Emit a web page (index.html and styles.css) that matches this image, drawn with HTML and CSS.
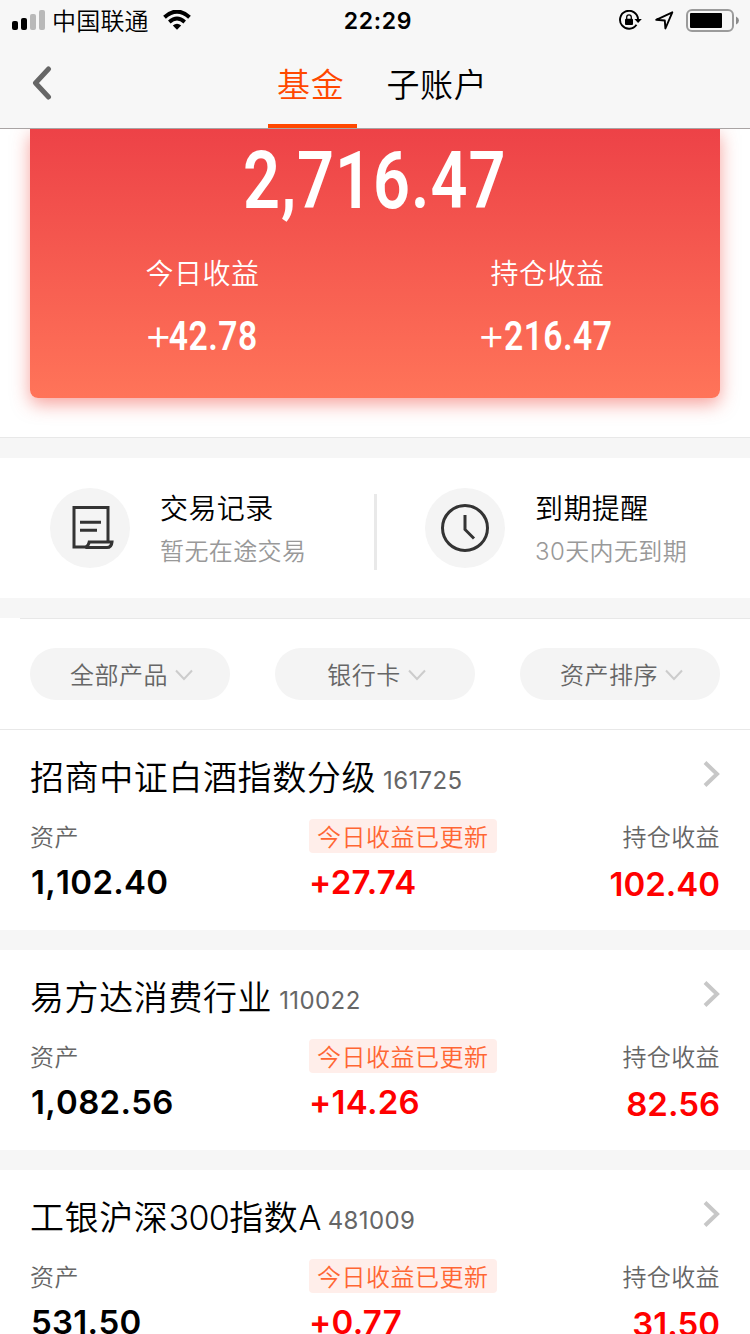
FILE: index.html
```html
<!DOCTYPE html>
<html lang="zh-CN">
<head>
<meta charset="utf-8">
<title>基金</title>
<link rel="stylesheet" href="styles.css">
</head>

<body>
<div class="header">
	<div class="status">
		<div class="status-left">
			<svg class="signal" width="33" height="20" viewBox="0 0 33 20">
				<rect x="0" y="11" width="6" height="9" rx="2"/>
				<rect x="9" y="8" width="6" height="12" rx="2"/>
				<rect x="18" y="4" width="6" height="16" rx="2" fill="#b9b9b9"/>
				<rect x="27" y="0" width="6" height="20" rx="2" fill="#b9b9b9"/>
			</svg>
			<span class="carrier">中国联通</span>
			<svg class="wifi" width="28" height="20" viewBox="0 0 28 20">
				<path d="M1.5 7.2Q14 -4 26.500 7.200" fill="none" stroke="#000" stroke-width="4"/>
				<path d="M6.300 12Q14 5.200 21.700 12" fill="none" stroke="#000" stroke-width="3.800"/>
				<path d="M9.800 15.500Q14 12 18.200 15.500L14 19.800Z"/>
			</svg>
		</div>
		<span class="clock">22:29</span>
		<div class="status-right">
			<svg width="23" height="20" viewBox="0 0 23 20">
				<path d="M17.500 14.800A9 9 0 1 1 19 9" fill="none" stroke="#000" stroke-width="1.900"/>
				<path d="M15.400 9H22.800L19.100 13Z"/>
				<rect x="6" y="8.700" width="8" height="6.300" rx="1"/>
				<path d="M7.700 9V7.200a2.300 2.300 0 0 1 4.600 0V9" fill="none" stroke="#000" stroke-width="1.300"/>
			</svg>
			<svg class="locate" width="19" height="19" viewBox="0 0 19 19">
				<path d="M1.200 8.800L17.300 1.300L10.400 17.500L9.800 9.500Z" fill="none" stroke="#000" stroke-width="1.900" stroke-linejoin="round"/>
			</svg>
			<svg class="battery" width="53" height="23" viewBox="0 0 53 23">
				<rect x="1" y="1" width="46" height="21" rx="5" fill="none" stroke="#9b9b9b" stroke-width="2"/>
				<rect x="4" y="4" width="32" height="15" rx="1"/>
				<path d="M50 7.500Q53 9 53 11.500T50 15.500Z" fill="#8a8a8a"/>
			</svg>
		</div>
	</div>
	<div class="nav">
		<svg class="back" width="20" height="34" viewBox="0 0 20 34">
			<path d="M16.500 3L3.500 17L16.500 31" fill="none" stroke="#666" stroke-width="5" stroke-linecap="round" stroke-linejoin="round"/>
		</svg>
		<div class="tabs">
			<span class="tab active">基金</span>
			<span class="tab">子账户</span>
		</div>
	</div>
</div>

<div class="summary">
	<div class="card">
		<div class="total"><span class="din">2,716.47</span></div>
		<div class="profits">
			<div class="profit">
				<div class="profit-label">今日收益</div>
				<div class="profit-num"><span class="plus">+</span><span class="din">42.78</span></div>
			</div>
			<div class="profit">
				<div class="profit-label">持仓收益</div>
				<div class="profit-num"><span class="plus">+</span><span class="din">216.47</span></div>
			</div>
		</div>
	</div>
</div>

<div class="links">
	<div class="link">
		<div class="circle">
			<svg width="80" height="80" viewBox="0 0 80 80" fill="none" stroke="#333" stroke-width="3">
				<path d="M58 53V19.500H24V59H37"/>
				<path d="M30 34.300H51M30 42.300H47"/>
				<path d="M35.500 59.500Q38.500 58 39.200 54H62Q61.500 59.500 57 59.500Z"/>
			</svg>
		</div>
		<div class="link-text">
			<div class="link-title">交易记录</div>
			<div class="link-sub">暂无在途交易</div>
		</div>
	</div>
	<div class="split"></div>
	<div class="link">
		<div class="circle">
			<svg width="80" height="80" viewBox="0 0 80 80" fill="none" stroke="#333" stroke-width="3">
				<circle cx="40" cy="40" r="22.500"/>
				<path d="M40 27V41.500L49 50.500"/>
			</svg>
		</div>
		<div class="link-text">
			<div class="link-title">到期提醒</div>
			<div class="link-sub">30天内无到期</div>
		</div>
	</div>
</div>

<div class="filters">
	<div class="filter"><span>全部产品</span><svg width="18" height="12" viewBox="0 0 18 12"><path d="M1 1.500L9 10L17 1.500"/></svg></div>
	<div class="filter"><span>银行卡</span><svg width="18" height="12" viewBox="0 0 18 12"><path d="M1 1.500L9 10L17 1.500"/></svg></div>
	<div class="filter"><span>资产排序</span><svg width="18" height="12" viewBox="0 0 18 12"><path d="M1 1.500L9 10L17 1.500"/></svg></div>
</div>

<div class="fund">
	<div class="fund-head">
		<span class="fund-name">招商中证白酒指数分级</span><span class="fund-code">161725</span>
		<svg class="more" width="18" height="26" viewBox="0 0 18 26"><path d="M2 1.500L14 13L2 24.500"/></svg>
	</div>
	<div class="fund-labels">
		<span class="label">资产</span><span class="updated">今日收益已更新</span><span class="label">持仓收益</span>
	</div>
	<div class="fund-nums">
		<span class="num">1,102.40</span><span class="red">+27.74</span><span class="red hold">102.40</span>
	</div>
</div>

<div class="fund">
	<div class="fund-head">
		<span class="fund-name">易方达消费行业</span><span class="fund-code">110022</span>
		<svg class="more" width="18" height="26" viewBox="0 0 18 26"><path d="M2 1.500L14 13L2 24.500"/></svg>
	</div>
	<div class="fund-labels">
		<span class="label">资产</span><span class="updated">今日收益已更新</span><span class="label">持仓收益</span>
	</div>
	<div class="fund-nums">
		<span class="num">1,082.56</span><span class="red">+14.26</span><span class="red hold">82.56</span>
	</div>
</div>

<div class="fund">
	<div class="fund-head">
		<span class="fund-name">工银沪深<span class="latin">300</span>指数<span class="latin">A</span></span><span class="fund-code">481009</span>
		<svg class="more" width="18" height="26" viewBox="0 0 18 26"><path d="M2 1.500L14 13L2 24.500"/></svg>
	</div>
	<div class="fund-labels">
		<span class="label">资产</span><span class="updated">今日收益已更新</span><span class="label">持仓收益</span>
	</div>
	<div class="fund-nums">
		<span class="num">531.50</span><span class="red">+0.77</span><span class="red hold">31.50</span>
	</div>
</div>
</body>
</html>
```
FILE: styles.css
```css
*{
	box-sizing:border-box;
}

body{
	margin:0;
	width:750px;
	height:1334px;
	overflow:hidden;
	background-color:#f6f6f6;
	font-family:Inter,"Noto Sans CJK SC",sans-serif;
	font-weight:350;
	font-kerning:none;
	color:#000;
}

svg{
	display:block;
	flex:none;
}

/* header */
.header{
	position:relative;
	height:129px;
	background-color:#f7f7f7;
	border-bottom:1px solid #a9a4a4;
}

.status{
	display:grid;
	grid-template-columns:1fr auto 1fr;
	height:40px;
	padding:0 11px 0 12px;
	align-items:center;
}

.status-left, .status-right{
	display:flex;
	align-items:center;
}

.status-right{
	justify-content:flex-end;
}

.carrier{
	font-size:24px;
	line-height:40px;
	margin:0 14px 0 7px;
	padding-top:2px;
	height:40px;
	letter-spacing:0.2px;
}

.clock{
	padding:1px 0 0 5px;
	font-size:23px;
	font-weight:600;
	letter-spacing:0.7px;
}

.locate{
	margin:0 12px 0 13px;
}

.nav{
	display:flex;
	height:88px;
	padding-left:32px;
}

.back{
	margin-top:26px;
}

.tabs{
	display:flex;
	margin-left:216px;
	gap:20px;
}

.tab{
	height:88px;
	padding:0 14px 0 9px;
	border-bottom:4px solid transparent;
	font-size:33px;
	line-height:90px;
	letter-spacing:0.7px;
}

.active{
	padding-right:13px;
	color:#ff4800;
	border-color:#ff4800;
}

/* total card */
.summary{
	height:309px;
	padding:0 30px;
	background-color:#fff;
	border-bottom:1px solid #e8e8e8;
}

.card{
	height:269px;
	padding-top:8px;
	border-radius:0 0 8px 8px;
	background:linear-gradient(#ed4247,#ff7459);
	box-shadow:0 6px 18px rgba(240,70,60,0.5);
	color:#fff;
	text-align:center;
}

.din{
	display:inline-block;
	font-family:Roboto,sans-serif;
	font-weight:600;
	letter-spacing:0.015em;
	transform:scaleX(0.82);
}

.total{
	height:84px;
	font-size:79px;
	line-height:84px;
}

.profits{
	display:flex;
}

.profit{
	width:345px;
}

.profit-label{
	margin-top:33px;
	font-size:28px;
	line-height:40px;
	letter-spacing:0.5px;
}

.profit-num{
	height:40px;
	margin-top:20px;
	padding-left:6px;
	font-size:41px;
	line-height:40px;
}

.plus{
	margin-right:-14px;
	font-size:44px;
}

/* records and reminder */
.links{
	display:flex;
	height:140px;
	margin-top:20px;
	background-color:#fff;
}

.link{
	display:flex;
	width:374px;
	padding:30px 0 0 50px;
}

.split{
	width:3px;
	height:76px;
	margin:36px -2px 0 0;
	background-color:#e9e9e9;
}

.circle{
	width:80px;
	height:80px;
	border-radius:50%;
	background-color:#f4f4f4;
}

.link-text{
	margin-left:30px;
}

.link-title{
	padding-top:1px;
	font-size:28px;
	line-height:40px;
	letter-spacing:0.4px;
}

.link-sub{
	margin-top:6px;
	font-size:24px;
	line-height:34px;
	letter-spacing:0.4px;
	color:#999;
}

/* filters */
.filters{
	display:flex;
	justify-content:space-between;
	height:112px;
	margin-top:20px;
	padding:30px 30px 0;
	background:linear-gradient(#e8e8e8,#e8e8e8) 20px 0/750px 1px no-repeat #fff;
	border-bottom:1px solid #e8e8e8;
}

.filter{
	display:flex;
	align-items:center;
	justify-content:center;
	width:200px;
	height:52px;
	padding-left:3px;
	border-radius:26px;
	background-color:#f4f4f4;
	font-size:24px;
	letter-spacing:0.5px;
	color:#666;
}

.filter span{
	padding-bottom:1px;
}

.filter svg{
	margin:1px 0 0 7px;
}

.filter path{
	fill:none;
	stroke:#ccc;
	stroke-width:2;
}

/* fund list */
.fund{
	height:200px;
	margin-bottom:20px;
	padding:24px 30px 0;
	background-color:#fff;
}

.fund-head{
	display:flex;
	align-items:baseline;
	height:48px;
	line-height:48px;
}

.fund-name{
	font-size:34px;
	letter-spacing:0.6px;
}

.latin{
	letter-spacing:-0.6px;
}

.fund-code{
	position:relative;
	top:-1px;
	margin-left:7px;
	font-size:24px;
	font-weight:400;
	letter-spacing:0.4px;
	color:#666;
}

.more{
	align-self:flex-start;
	margin:7px -1px 0 auto;
}

.more path{
	fill:none;
	stroke:#c7c7c7;
	stroke-width:4;
}

.fund-labels, .fund-nums{
	display:grid;
	grid-template-columns:279px 1fr auto;
}

.fund-labels{
	margin-top:17px;
	height:34px;
	line-height:37px;
	font-size:24px;
}

.label{
	letter-spacing:0.4px;
	color:#666;
}

.updated{
	justify-self:start;
	width:188px;
	height:34px;
	padding-left:8px;
	border-radius:4px;
	background-color:#ffeeea;
	letter-spacing:0.5px;
	color:#ff6633;
}

.fund-nums{
	margin-top:7px;
	font-size:33px;
	line-height:44px;
	font-weight:600;
}

.num{
	padding-left:1px;
	letter-spacing:0.3px;
}

.red{
	font-kerning:normal;
	letter-spacing:0.3px;
	color:#f00;
}

.hold{
	padding-top:2px;
	letter-spacing:0;
}
```
